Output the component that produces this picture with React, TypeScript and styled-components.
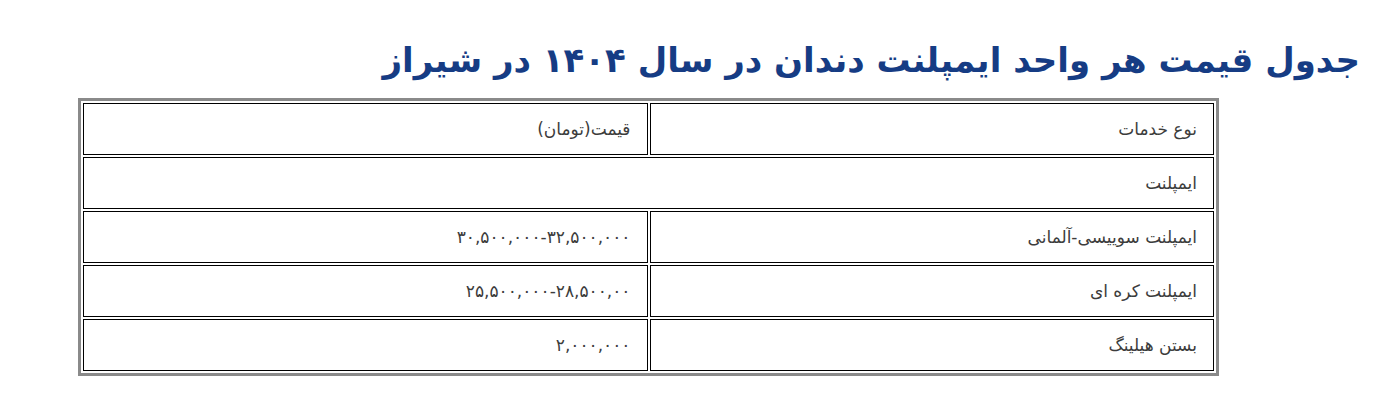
import styled, { createGlobalStyle } from "styled-components";

const GlobalStyle = createGlobalStyle`
  html, body {
    margin: 0;
    padding: 0;
    background: #ffffff;
  }
`;

const Page = styled.div`
  direction: rtl;
  padding: 32px 38px 0 78px;
  font-family: "DejaVu Sans", sans-serif;
`;

const Title = styled.h2`
  margin: 0 0 10px 0;
  font-size: 34px;
  line-height: 56px;
  font-weight: bold;
  color: #163c84;
  text-align: right;
`;

const PriceTable = styled.table`
  width: 1141px;
  margin: 0 auto 0 0;
  table-layout: fixed;
  border: 3px solid #8a8a8a;
  border-spacing: 2px;
`;

const Cell = styled.td`
  width: 50%;
  border: 1px solid #000000;
  padding: 12px 16px;
  font-size: 17px;
  line-height: 26px;
  color: #3c3c3c;
  text-align: right;
  vertical-align: middle;
`;

const rows: [string, string][] = [
  ["ایمپلنت سوییسی-آلمانی", "۳۰,۵۰۰,۰۰۰-۳۲,۵۰۰,۰۰۰"],
  ["ایمپلنت کره ای", "۲۵,۵۰۰,۰۰۰-۲۸,۵۰۰,۰۰"],
  ["بستن هیلینگ", "۲,۰۰۰,۰۰۰"],
];

export default function App() {
  return (
    <>
      <GlobalStyle />
      <Page>
        <Title>جدول قیمت هر واحد ایمپلنت دندان در سال ۱۴۰۴ در شیراز</Title>
        <PriceTable>
          <tbody>
            <tr>
              <Cell>نوع خدمات</Cell>
              <Cell>قیمت(تومان)</Cell>
            </tr>
            <tr>
              <Cell colSpan={2}>ایمپلنت</Cell>
            </tr>
            {rows.map(([name, price]) => (
              <tr key={name}>
                <Cell>{name}</Cell>
                <Cell>{price}</Cell>
              </tr>
            ))}
          </tbody>
        </PriceTable>
      </Page>
    </>
  );
}
